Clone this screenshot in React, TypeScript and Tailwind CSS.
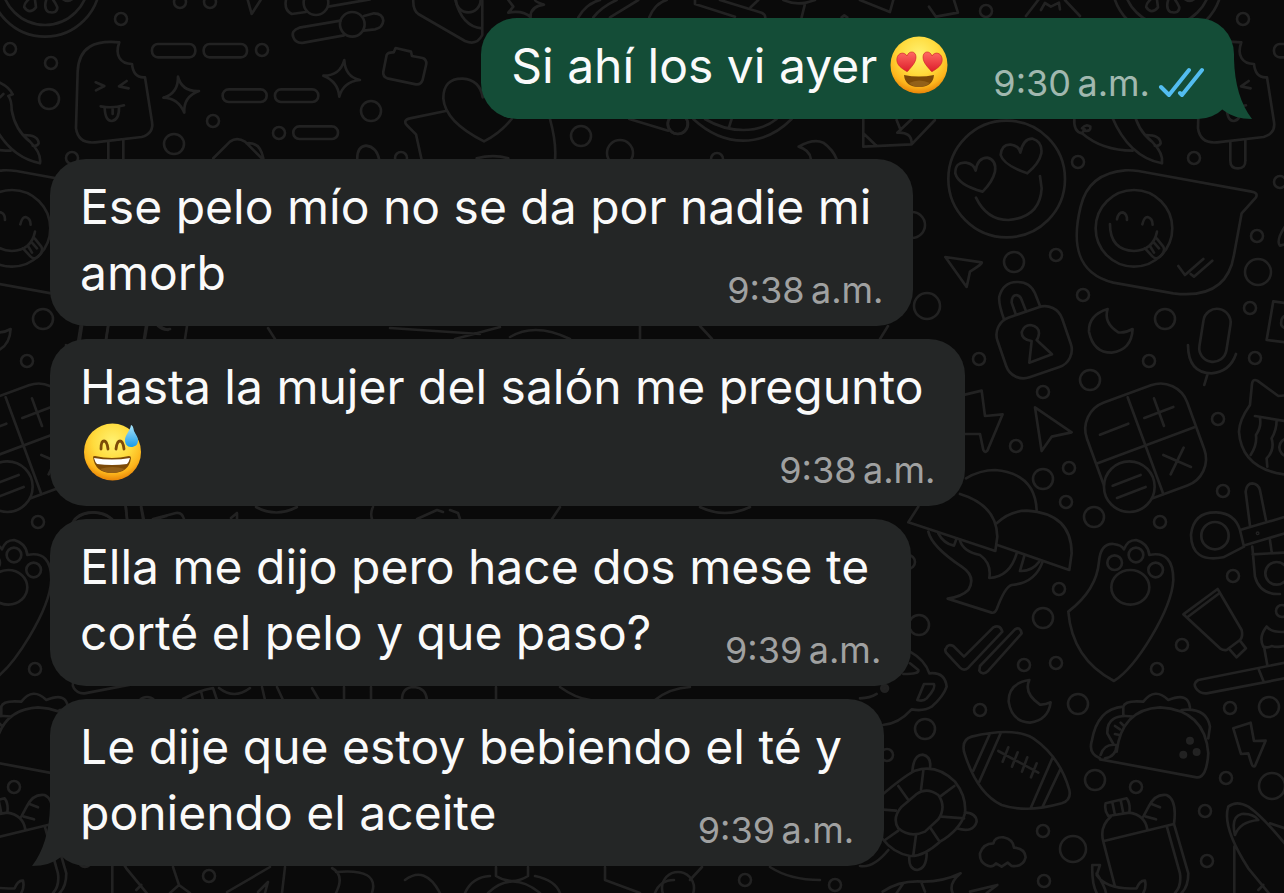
type Message = {
  id: number;
  lines: string[];
  emoji?: "hearts" | "sweat";
  time: string;
  mine?: boolean;
  tail?: boolean;
};

const messages: Message[] = [
  { id: 1, lines: ["Si ahí los vi ayer"], emoji: "hearts", time: "9:30\u202fa.m.", mine: true, tail: true },
  { id: 2, lines: ["Ese pelo mío no se da por nadie mi", "amorb"], time: "9:38\u202fa.m." },
  { id: 3, lines: ["Hasta la mujer del salón me pregunto", ""], emoji: "sweat", time: "9:38\u202fa.m." },
  { id: 4, lines: ["Ella me dijo pero hace dos mese te", "corté el pelo y que paso?"], time: "9:39\u202fa.m." },
  { id: 5, lines: ["Le dije que estoy bebiendo el té y", "poniendo el aceite"], time: "9:39\u202fa.m.", tail: true },
];

// [cx, cy, r]
const dots = [
  [121, 19, 6], [10, 49, 6], [51, 63, 6], [49, 99, 10], [180, 2, 6], [210, 2, 6], [262, 50, 6],
  [213, 121, 6], [174, 144, 10], [279, 133, 6], [371, 111, 10], [401, 158, 6], [581, 136, 10],
  [678, 124, 10], [620, 153, 13], [717, 159, 6], [986, 11, 6], [912, 225, 13], [927, 306, 13],
  [1014, 262, 10], [1056, 255, 6], [1078, 162, 6], [1194, 158, 6], [1280, 182, 6], [1257, 236, 6],
  [1258, 272, 13], [1250, 308, 6], [1083, 295, 6], [1165, 319, 10], [1149, 361, 6], [1255, 358, 6],
  [979, 359, 6], [1090, 380, 10], [1043, 392, 6], [1016, 446, 6], [1069, 468, 6], [1043, 479, 10],
  [1066, 502, 6], [1094, 517, 10], [1160, 522, 6], [1218, 419, 6], [1223, 491, 6], [1059, 589, 6],
  [1043, 618, 10], [919, 625, 10], [1233, 576, 6], [1282, 611, 6], [908, 562, 7], [1024, 665, 6],
  [1056, 663, 6], [1182, 645, 6], [1157, 669, 6], [980, 710, 6], [925, 729, 10], [887, 755, 6],
  [1078, 704, 10], [1230, 708, 6], [1269, 707, 10], [1095, 780, 10], [1136, 787, 6], [1226, 778, 6],
  [1272, 786, 13], [1043, 831, 6], [1073, 849, 13], [1205, 811, 6], [1207, 861, 6], [1044, 881, 6],
];

function TopLeftDoodles() {
  return (
    <g transform="scale(.3333)">
      <circle cx="135" cy="-55" r="165" />
      <circle cx="135" cy="-55" r="130" />
      <path d="M95-10Q70 10 73 22Q88 45 108 22L104-8M142-10Q128 25 145 36Q172 42 172 22Q165 5 152-10M190-2Q204 8 216-2" />
      {/* ice lolly */}
      <path d="M358 127C285 120 236 140 233 215L228 385Q235 432 285 427L425 411Q462 400 456 365L435 232Q400 235 396 192C360 192 344 165 358 127Z" />
      <path d="M325 425V482Q325 505 348 505T370 482V420" />
      <path d="M287 247L313 258L288 271M380 243L357 259L386 265M302 319Q338 326 372 316M314 324Q316 364 336 363Q358 360 357 322M338 326V342" />
      <rect x="456" y="132" width="130" height="40" rx="18" />
      <rect x="611" y="132" width="130" height="40" rx="18" />
      <rect x="668" y="268" width="132" height="38" rx="18" />
      <rect x="825" y="268" width="130" height="38" rx="18" />
      <rect x="880" y="379" width="134" height="38" rx="18" />
      <path d="M534 230Q545 275 597 273Q550 290 553 338Q535 295 490 293Q535 280 534 230Z" />
      <path d="M1033 180Q1035 230 1080 240Q1030 245 1018 290Q1015 245 970 227Q1020 228 1033 180Z" />
      {/* banana leaf */}
      <path d="M-20 240Q25 255 38 283L25 288Q35 300 35 330Q45 390 90 425Q125 460 120 490Q20 470-30 350M72 405Q115 405 116 430Q112 440 98 437" />
      <path d="M-143 355Q-146 395-120 400L-112 388M-120 385Q-108 370-95 380Q-92 395-112 392M-120 400Q-60 452 32 452M0 292L10 282" />
      {/* sliders */}
      <circle cx="1057" cy="73" r="37" />
      <path d="M1022 62L898 83Q872 92 880 112Q888 132 912 128L1032 106M1092 48L1122 40Q1148 40 1150 62Q1148 84 1125 88L1090 92" />
      <circle cx="948" cy="8" r="37" />
      <path d="M858 0Q852 30 875 42L918 36M985 20L1110-2M742-5L755 42L782 0" />
      <path d="M1187 144L1233 155L1236 168L1268 174Q1280 178 1279 192L1268 240Q1262 255 1248 253L1162 235Q1148 230 1150 215L1160 165Q1164 156 1181 157Z" />
      <path d="M1240-5Q1238 30 1255 42L1395 123Q1430 138 1447 105V-5M1365-5Q1385 80 1445 85" />
      <circle cx="1405" cy="0" r="37" />
      <path d="M640 475L690 425Q710 410 735 425L785 475M740 430Q780 425 790 475M1072 480Q1070 440 1098 437Q1130 440 1138 480" />
    </g>
  );
}

function TopDoodles() {
  return (
    <g transform="translate(380 0) scale(.3333)">
      <path d="M312 424Q195 365 190 295Q190 235 248 236Q300 240 308 292M312 424Q360 400 395 357M197 333L90 355Q68 360 80 375L108 403L125 480M510 357Q530 430 525 480M290 475Q340 462 385 475" />
      <path d="M385 0L400 20L385 38Q430 30 452 52Q450 20 492 14Q465 5 465 0M595 52Q620 10 660 0M640 52Q665 20 710 0M690 52L775 0M808 52Q825 10 860 0" />
      <path d="M945 0V12L1065 50M1020 0L1145 38Q1155 42 1156 52M1112 22L1135 0M1210 0Q1255 20 1305 0M1275 12L1265 52M1440 0L1530 36L1540 0M1385 52L1393 46L1402 52" />
      <circle cx="893" cy="372" r="30" />
      <path d="M748 357L865 392M940 357Q1010 422 1090 422T1235 357M975 357Q1030 390 1090 390T1190 357M1055 357L1047 382" />
      <path d="M1450 357V440L1595 433L1665 360M1450 400L1490 438M1595 430Q1595 395 1552 398L1595 358M1550 360L1562 390M1256 440Q1300 415 1330 428Q1360 450 1370 478M1256 440Q1290 450 1293 478" />
      <path d="M1647 20L1668 50L1734 38L1722 0M1938 48L1975 0M1983 30L1995 9L2013 20L2037 8L2040 28M2100 48L2055 0" />
    </g>
  );
}

function RightDoodles() {
  return (
    <g transform="translate(880 110) scale(.3333)">
      <circle cx="380" cy="207" r="175" />
      <path d="M308 245Q235 225 226 190Q225 155 258 158Q282 162 287 182Q293 143 322 143Q350 150 345 185Q338 215 308 245Z" />
      <path d="M442 190Q370 165 362 135Q365 102 392 104Q418 108 421 128Q430 85 458 86Q488 95 484 130Q478 160 442 190Z" />
      <path d="M288 263Q320 330 385 330Q480 322 485 235L480 198" />
      {/* speech bubble with its own smiley */}
      <path d="M735 181Q625 190 602 290C575 400 588 490 700 518L880 550Q1040 570 1062 435L1085 310L1128 262Q1135 248 1115 245L775 183Q755 180 735 181Z" />
      <circle cx="762" cy="355" r="115" />
      <path d="M711 328Q715 307 728 307Q742 312 741 330M787 343Q793 320 803 321Q818 325 818 344M690 342Q690 420 762 423Q820 420 831 365" />
      <path d="M795 415L818 440Q828 450 840 440Q858 425 850 410L830 385M810 408L822 428M822 398L837 415" />
      <path d="M895 468L915 495L970 447M932 492L942 500L997 452M196 441L305 457Q310 460 270 485L260 531Z" />
      {/* padlock */}
      <rect x="360" y="602" width="205" height="190" rx="55" transform="rotate(-19 462 697)" />
      <path d="M372 628Q355 580 358 560Q370 515 412 516Q450 515 465 550L480 588M407 612L395 578Q395 555 410 555Q422 558 425 570L438 603" />
      <path d="M455 693Q425 690 425 667Q432 645 452 645Q478 650 477 670Q475 685 470 690L516 733L448 758Z" />
      <path d="M683 597Q625 615 627 665Q640 728 695 728Q755 720 758 657Q735 670 715 667Q670 640 683 597Z" />
      <rect x="964" y="596" width="82" height="160" rx="41" transform="rotate(9 1005 676)" />
      <path d="M924 705Q925 790 995 790Q1050 785 1068 732M982 795L973 825M1280 588L1180 574L1160 690L1280 705M1225 335Q1185 390 1200 407L1225 400M1230 615Q1200 615 1204 645Q1210 655 1230 660" />
    </g>
  );
}

function MiddleDoodles() {
  return (
    <g transform="translate(880 370) scale(.3333)">
      <path d="M255 74L305 62L315 138L368 133L322 242Q315 250 310 240L300 192L255 192M465 112L575 187L515 200L485 243Z" />
      {/* calculator */}
      <rect x="637" y="62" width="320" height="320" rx="85" transform="rotate(-20 797 222)" />
      <path d="M743 82L850 372M653 280L943 172M660 194L745 161M793 144L880 111M822 85L852 168M850 255L933 291M911 233L872 313" />
      <circle cx="748" cy="350" r="76" fill="#0a0a0a" />
      <path d="M698 347L782 315M711 384L797 351" />
      <path d="M1230 75L1195 78L1132 32Q1118 25 1116 42L1110 105Q1078 150 1077 185Q1085 300 1225 315M1125 138L1225 155M1140 145Q1145 170 1128 195Q1132 225 1112 255M1190 150Q1190 180 1175 205Q1185 240 1160 265L1162 290" />
      <circle cx="1225" cy="232" r="27" />
      {/* mushrooms */}
      <path d="M258 325Q300 300 345 300Q465 310 470 420M240 372Q350 405 352 500L346 543L85 457L115 410M350 460Q390 422 440 422Q575 430 575 550L568 600L352 525" />
      <path d="M145 485Q155 530 245 590Q290 620 265 660Q245 680 203 686L335 728Q345 730 350 718Q375 650 395 645Q465 640 488 575M175 490Q190 520 222 527L230 505M240 512Q250 545 300 555Q335 580 328 624Q390 620 410 550M433 558L420 603Q455 605 478 575" />
      {/* paw */}
      <path d="M565 725Q650 660 657 575Q662 520 700 522Q725 525 732 538Q742 510 768 510Q805 520 808 555Q880 540 880 630C875 720 770 890 702 933C610 885 572 810 565 725Z" />
      <circle cx="704" cy="578" r="22" />
      <circle cx="768" cy="555" r="22" />
      <circle cx="827" cy="600" r="22" />
      <ellipse cx="751" cy="652" rx="57" ry="52" />
      <circle cx="1005" cy="497" r="41" />
      <path d="M1092 530L1030 562Q935 580 933 495Q940 425 1010 427Q1065 430 1080 480ZM1080 480L1225 438M1097 525L1225 487M1110 467L1097 365Q1100 340 1117 340Q1135 342 1140 360L1158 450M1117 530L1125 620Q1140 675 1200 672M1118 553L1212 548M1170 510L1175 545" />
      <circle cx="1190" cy="610" r="34" />
      <circle cx="1133" cy="490" r="2" />
      <path d="M910 733L1013 657L1085 780Q1090 800 1080 810L1040 840Q1030 842 1020 835ZM922 742L1015 672M1050 840L1070 862L1098 835L1080 812" />
      <path d="M1160 770Q1135 800 1150 830Q1165 835 1175 828Q1195 835 1225 825M1160 770Q1175 790 1225 785M1153 835L1162 885" />
    </g>
  );
}

function BottomDoodles() {
  return (
    <g transform="translate(860 620) scale(.3333)">
      <path d="M258 85Q265 70 280 78L312 110L400 22Q420 12 427 35L325 143Q312 155 300 143L262 102Q252 92 258 85ZM360 138L465 28Q480 18 485 40L385 152Q368 168 358 152Z" />
      <path d="M1290 125L1015 180Q998 190 1008 205Q1020 222 1040 220L1290 172M1197 150L1210 182" />
      {/* teapot */}
      <path d="M150 95Q195 120 208 160Q255 155 260 200Q250 230 215 260Q190 275 155 268Q115 312 68 315M150 130L175 150Q180 162 130 162M192 192H222Q228 205 200 235Q190 245 172 240ZM0 235Q30 235 50 222" />
      <path d="M508 180Q445 190 446 245Q455 305 510 308Q565 300 572 247Q555 255 540 254Q490 220 508 180Z" />
      {/* football */}
      <path d="M335 350Q305 358 312 395Q350 520 425 555Q500 580 605 550Q635 540 628 510Q600 410 520 355Q460 320 335 350ZM388 345L340 452M422 340L358 485M577 415L512 565M600 450L547 562" />
      <path d="M415 393L535 458M445 382L428 425M473 397L456 440M502 412L486 455M530 430L513 472" />
      {/* taco */}
      <path d="M720 415Q685 400 695 365Q712 265 790 260Q795 240 850 245Q885 200 925 240Q985 215 990 262M770 395Q785 268 900 262Q1035 270 1045 400Q1040 475 1010 472L720 418M965 270Q1040 262 1050 320L1045 355M820 290Q740 278 742 340L760 372M722 405Q732 370 770 375Q768 410 735 415M790 260V285M765 318L780 328M782 308L792 318M765 342L778 345" />
      <g className="fill-[#222]">
        <circle cx="74" cy="205" r="10" />
        <circle cx="990" cy="362" r="8" />
        <circle cx="970" cy="404" r="8" />
        <circle cx="1010" cy="396" r="8" />
      </g>
      <path d="M1120 325L1172 308L1182 363L1217 362L1185 438Q1178 442 1175 432L1165 400L1143 402Z" />
      {/* turtle */}
      <path d="M60 530Q130 470 165 452Q230 430 285 485Q320 530 315 580Q300 630 240 665Q190 710 150 708Q100 700 66 655M125 560L170 522Q200 500 235 525Q260 560 235 598L195 635Q150 655 115 625Q95 595 125 560Z" />
      <path d="M190 452L183 510M115 498L145 540M60 568L108 572M283 498L240 530M245 590L312 595M210 622L237 662M168 645L160 705M115 632L75 660M157 455Q160 405 188 404Q215 410 210 445M315 577Q350 580 350 605Q340 640 290 625M148 710Q145 748 172 750Q200 745 200 700M85 690Q40 745 0 738" />
      <path d="M378 735Q358 725 360 700Q370 670 400 670Q405 650 430 652Q460 658 462 683Q495 685 497 712Q490 742 455 738L443 728L425 740L408 730Q395 745 378 735Z" />
      {/* flask and bread */}
      <path d="M737 550L800 535Q812 550 808 578L745 588Q732 570 737 550ZM757 547L765 585M782 540L790 580M752 590Q718 620 730 665L765 800M808 578Q855 585 862 628M732 663L942 612Q952 540 920 525Q885 520 866 560L850 590M875 552L900 562M858 590L888 598M920 618L960 760Q965 800 945 819M942 612L985 760Q985 800 965 819" />
      <path d="M697 735H720L710 765Q740 810 830 805Q840 780 855 782Q860 800 850 819M697 735Q695 790 710 819M710 760Q735 800 738 819" />
      <path d="M1105 560Q1130 540 1165 560Q1210 590 1290 690M1105 560Q1085 620 1165 745L1235 830M1125 645Q1112 590 1145 582Q1180 580 1195 600Q1140 605 1125 645ZM1230 610L1290 630M1123 680V830M1195 810L1210 795" />
      <path d="M68 815Q120 780 190 785Q250 785 302 760Q265 790 278 819M330 815L412 795L380 819M110 819L130 790M185 790L195 815" />
    </g>
  );
}

// The slivers that show between the message rows
function GapDoodles() {
  return (
    <g>
      <path d="M82 326L80 339M108 326L106 339M146 326L144 339M187 326L185 339M158 326Q164 331 170 329M268 328L275 339M390 328L480 334M455 339L500 327M510 337Q535 322 570 339M640 326V339M700 326L712 339M880 339L888 326" />
      <path d="M126 507L127 519M141 507L143 519M75 519Q93 506 112 519M153 519L176 513Q182 512 184 519M231 518L237 513V519M256 507Q276 518 297 507M372 519Q370 513 373 507M417 519L437 510L443 512M450 510L458 513L460 519M560 507L552 519M700 507Q725 519 750 507" />
      <path d="M183 699Q197 691 213 688M201 691L203 700M213 688L217 700M219 688Q234 700 250 688M262 687L265 700M277 687L283 700M312 688L319 700M344 687V700M371 687V700M402 700Q402 687 414 687Q426 688 427 700M496 687V700M560 687Q575 698 590 700M655 700Q670 688 690 687" />
      <path d="M173 867L179 885L190 893M179 885L170 893M227 892L270 867M258 892L268 882L265 893M285 867L282 893M332 868Q345 875 336 893M336 872Q380 868 372 893M405 880Q425 865 440 893M465 893Q472 877 490 876M496 867V876Q512 886 528 876V867M535 876Q555 880 560 893M488 893Q512 870 540 893M605 867V880L640 893M655 893Q660 880 674 880M690 880L702 867M770 867Q790 880 820 880" />
      <circle cx="209" cy="876" r="6" />
      <circle cx="745" cy="880" r="6" />
      <circle cx="678" cy="888" r="16" />
      <circle cx="835" cy="885" r="6" />
    </g>
  );
}

function Wallpaper() {
  return (
    <svg
      aria-hidden="true"
      className="absolute inset-0 h-full w-full fill-none stroke-[#222222]"
      strokeLinecap="round"
      strokeLinejoin="round"
    >
      <defs>
        <g id="tile">
          <g strokeWidth="8">
            <TopLeftDoodles />
            <TopDoodles />
            <RightDoodles />
            <MiddleDoodles />
            <BottomDoodles />
          </g>
          {dots.map(([cx, cy, r]) => (
            <circle key={`${cx}-${cy}`} cx={cx} cy={cy} r={r} strokeWidth="2.6" />
          ))}
        </g>
      </defs>
      <use href="#tile" />
      <use href="#tile" x="1122" />
      <use href="#tile" x="-1122" />
      <g strokeWidth="2.6">
        <GapDoodles />
      </g>
    </svg>
  );
}

function FaceGradient({ id }: { id: string }) {
  return (
    <radialGradient id={id} cx="50%" cy="32%" r="68%">
      <stop offset="0" stopColor="#fff272" />
      <stop offset=".5" stopColor="#ffdb3d" />
      <stop offset=".82" stopColor="#fdb51c" />
      <stop offset="1" stopColor="#e88408" />
    </radialGradient>
  );
}

function HeartEyes() {
  return (
    <svg role="img" aria-label="😍" viewBox="0 1 60 60" className="size-[60px] shrink-0 overflow-visible">
      <defs>
        <FaceGradient id="face-hearts" />
        <linearGradient id="heart" x1="0" y1="0" x2="0" y2="1">
          <stop offset="0" stopColor="#ff6a62" />
          <stop offset="1" stopColor="#dd1e2c" />
        </linearGradient>
      </defs>
      <circle cx="30" cy="30" r="28.5" fill="url(#face-hearts)" />
      <path d="M15 40Q30 43 45 40Q44 52 30 52T15 40Z" fill="#7c4a08" />
      <path d="M20 48Q30 43 41 48Q36 52 30 52T20 48Z" fill="#936018" />
      <g fill="url(#heart)" stroke="#c91c24" strokeWidth=".6">
        <path d="M17 36C10 32 7 28 8 23C9 18 15 16 18 21C20 15 27 16 27 22C27 28 22 32 19 36Q18 37 17 36Z" />
        <path d="M44 36C51 32 54 28 53 23C52 18 46 16 43 21C41 15 34 16 34 22C34 28 39 32 42 36Q43 37 44 36Z" />
      </g>
    </svg>
  );
}

function SweatSmile() {
  return (
    <svg role="img" aria-label="😅" viewBox="0 2 60 60" className="ml-1 size-[60px] shrink-0 overflow-visible">
      <defs>
        <FaceGradient id="face-sweat" />
        <linearGradient id="drop" x1="0" y1="0" x2="0" y2="1">
          <stop offset="0" stopColor="#a9e4fb" />
          <stop offset="1" stopColor="#189be8" />
        </linearGradient>
      </defs>
      <circle cx="28.5" cy="31" r="28.5" fill="url(#face-sweat)" />
      <path d="M17 28Q17 20 20 20T24 28M32 28Q33 20 36 20T40 28" fill="none" stroke="#7c4a08" strokeWidth="2.8" strokeLinecap="round" />
      <path d="M9 36Q9 35 11 35Q28 39 45 35Q47 35 47 37Q45 52 28 52T9 36Z" fill="#7c4a08" />
      <path d="M10 37Q28 40 46 37Q45 41 43 43Q28 45 13 43Q11 41 10 37Z" fill="#fff" />
      <path d="M16 48Q28 44 41 48Q35 52 28 52T16 48Z" fill="#936018" />
      <path d="M47 4Q49 4 50 10C52 14 54 16 54 19C54 24 51 26 47 26S41 23 41 19C41 14 46 10 47 4Z" fill="url(#drop)" />
    </svg>
  );
}

function ReadTicks() {
  return (
    <svg
      role="img"
      aria-label="Leído"
      viewBox="0 0 46 32"
      className="h-8 w-[46px] shrink-0 fill-none stroke-[#53bdf0]"
      strokeWidth="4"
      strokeLinecap="round"
      strokeLinejoin="round"
    >
      <path d="M3 20L11 28L31 3M22 26L24 28L44 3" />
    </svg>
  );
}

function Tail({ mine }: { mine?: boolean }) {
  return (
    <svg
      aria-hidden="true"
      viewBox="0 0 40 60"
      className={
        mine
          ? "absolute -right-[18px] bottom-0 h-[60px] w-10 fill-[#144d37]"
          : "absolute -left-[18px] bottom-0 h-[60px] w-10 -scale-x-100 fill-[#242626]"
      }
    >
      <path d="M0 0H22Q23 38 40 60Q22 60 11 51L0 40Z" />
    </svg>
  );
}

function Bubble({ msg }: { msg: Message }) {
  const head = msg.lines.slice(0, -1);
  const last = msg.lines[msg.lines.length - 1];
  return (
    <li
      className={
        msg.mine
          ? "relative mb-[27px] w-fit self-end rounded-[36px] bg-[#144d37] px-[30px] pt-[15px] pb-5"
          : "relative w-fit rounded-[36px] bg-[#242626] px-[30px] pt-[15px] pb-5"
      }
    >
      {msg.tail && <Tail mine={msg.mine} />}
      {head.map((line) => (
        <p key={line} className="relative pr-3">{line}</p>
      ))}
      <div className="relative flex items-end justify-between gap-11">
        <p className="flex min-h-[66px] items-center gap-3">
          {last}
          {msg.emoji === "hearts" && <HeartEyes />}
          {msg.emoji === "sweat" && <SweatSmile />}
        </p>
        <div className={msg.mine ? "-mb-0.5 flex items-center gap-2 text-[#a1b8af]" : "-mb-0.5 flex text-[#a0a1a1]"}>
          <time className="text-[36px] leading-9">{msg.time}</time>
          {msg.mine && <ReadTicks />}
        </div>
      </div>
    </li>
  );
}

export default function App() {
  return (
    <main className="relative min-h-screen overflow-hidden bg-[#0a0a0a] font-['Inter',sans-serif] text-[48px] leading-[66px] text-[#fafafa]">
      <Wallpaper />
      <ul className="relative flex flex-col gap-[13px] px-[50px] pt-[18px]">
        {messages.map((m) => (
          <Bubble key={m.id} msg={m} />
        ))}
      </ul>
    </main>
  );
}
